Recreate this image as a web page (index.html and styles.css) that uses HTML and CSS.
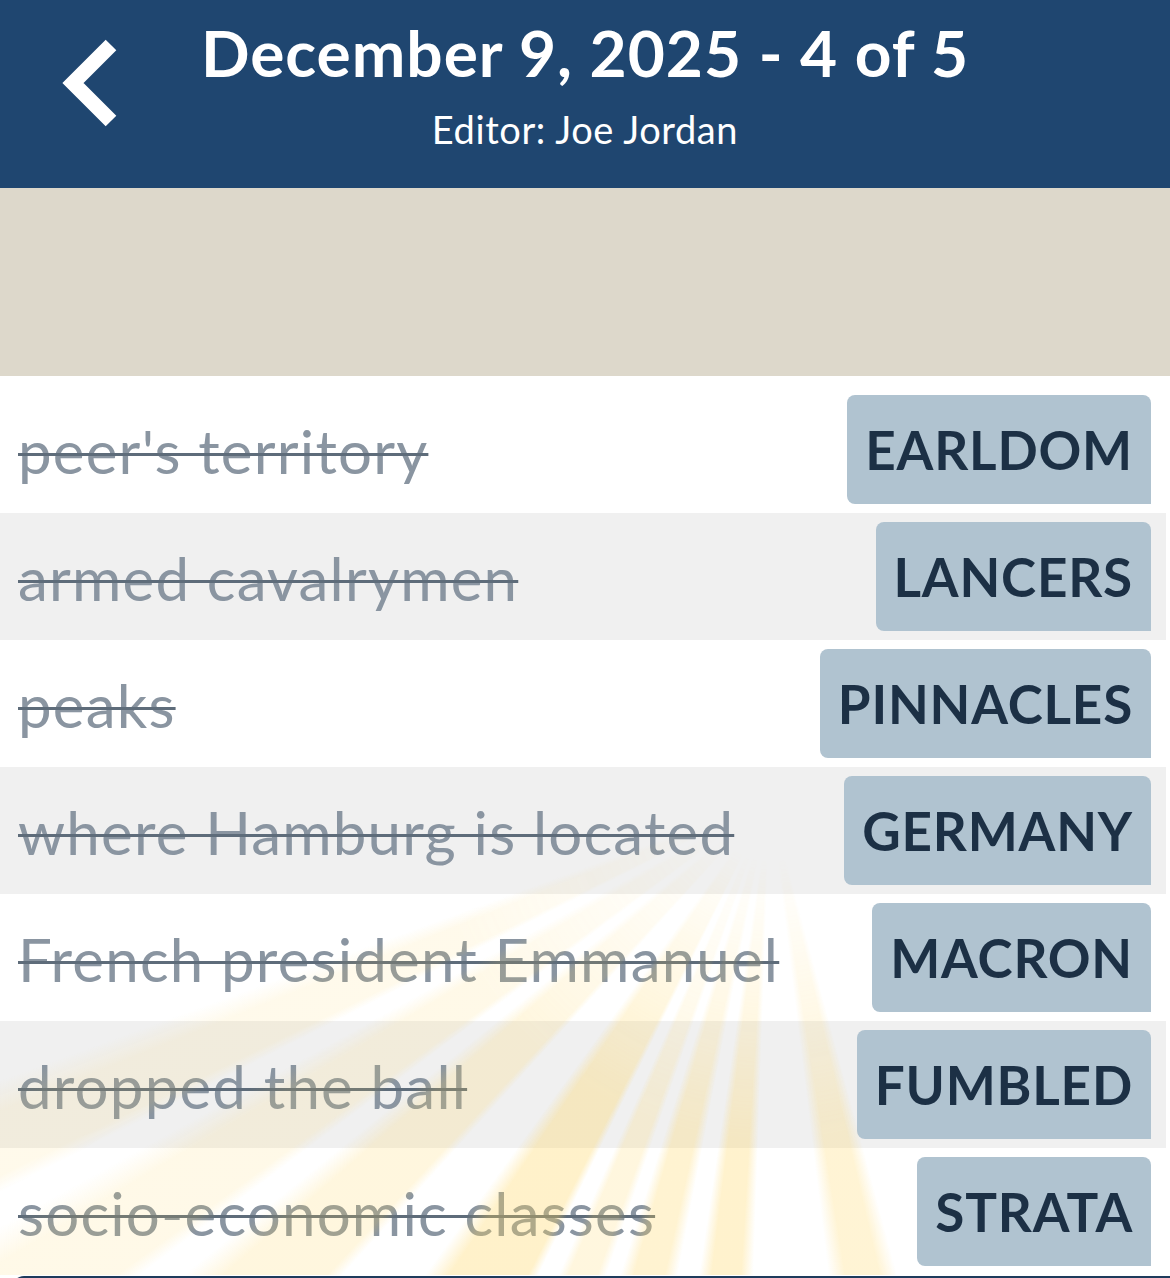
FILE: index.html
```html
<!DOCTYPE html>
<html lang="en">
<head>
    <meta charset="UTF-8">
    <meta name="viewport" content="width=device-width, initial-scale=1.0">
    <title>December 9, 2025 - 4 of 5</title>
    <link rel="stylesheet" href="styles.css">
</head>
<body>
    <div class="header">
        <a class="back" href="#" aria-label="Back">
            <svg width="64" height="94" viewBox="0 0 64 94">
                <polyline points="54,8 16,46 54,84" fill="none" stroke="#fff" stroke-width="15" stroke-linejoin="miter"/>
            </svg>
        </a>
        <div class="titles">
            <h1>December 9, 2025 - 4 of 5</h1>
            <div class="editor">Editor: Joe Jordan</div>
        </div>
    </div>
    <div class="band"></div>

    <div class="clues">
        <div class="row">
            <span class="clue">peer's territory</span>
            <span class="answer">EARLDOM</span>
        </div>
        <div class="row alt">
            <span class="clue">armed cavalrymen</span>
            <span class="answer">LANCERS</span>
        </div>
        <div class="row">
            <span class="clue">peaks</span>
            <span class="answer">PINNACLES</span>
        </div>
        <div class="row alt">
            <span class="clue">where Hamburg is located</span>
            <span class="answer">GERMANY</span>
        </div>
        <div class="row">
            <span class="clue">French president Emmanuel</span>
            <span class="answer">MACRON</span>
        </div>
        <div class="row alt">
            <span class="clue">dropped the ball</span>
            <span class="answer">FUMBLED</span>
        </div>
        <div class="row">
            <span class="clue">socio-economic classes</span>
            <span class="answer">STRATA</span>
        </div>
        <div class="rays"></div>
    </div>
    <div class="footer"></div>
</body>
</html>
```

FILE: styles.css
```css
html {
    overflow: hidden;
}
body {
    font-family: Lato, "Open Sans", sans-serif;
    margin: 0;
    padding: 0;
    background-color: #fff;
}
.header {
    background-color: #1f4670;
    height: 188px;
    position: relative;
    display: flex;
    justify-content: center;
    color: #fff;
}
.back {
    position: absolute;
    left: 57px;
    top: 37px;
    display: block;
}
.titles {
    text-align: center;
    padding-top: 16px;
}
.titles h1 {
    margin: 0;
    font-size: 64px;
    font-weight: 700;
    line-height: 74px;
    letter-spacing: 1px;
}
.editor {
    font-size: 38px;
    font-weight: 400;
    letter-spacing: 0.6px;
    margin-top: 16px;
}
.band {
    background-color: #ddd8cb;
    height: 188px;
}
.clues {
    position: relative;
    padding-top: 10px;
    margin-right: 4px;
}
.row {
    display: flex;
    align-items: center;
    justify-content: space-between;
    height: 127px;
    padding: 0 15px 0 18px;
    background-color: #fff;
}
.row.alt {
    background-color: #f0f0f0;
}
.clue {
    font-size: 60px;
    font-weight: 400;
    letter-spacing: 1.2px;
    color: #8a95a1;
    padding-top: 2px;
    text-decoration: line-through;
    text-decoration-color: #5e6c7a;
    text-decoration-thickness: 3px;
    white-space: nowrap;
}
.answer {
    background-color: #b0c3d0;
    color: #1c3045;
    font-size: 53px;
    font-weight: 700;
    letter-spacing: 0.8px;
    height: 109px;
    line-height: 109px;
    padding: 0 18px;
    border-radius: 8px 8px 0 8px;
}
.rays {
    position: absolute;
    left: 0;
    right: 0;
    top: 440px;
    bottom: 0;
    pointer-events: none;
    background: conic-gradient(from 0deg at 770px -16px,
        transparent 0deg 165deg,
        rgba(255, 212, 90, 0.26) 167deg 171deg,
        transparent 173deg 182deg,
        rgba(255, 212, 90, 0.3) 183.5deg 187deg,
        transparent 188.5deg 191deg,
        rgba(255, 212, 90, 0.28) 192.5deg 196deg,
        transparent 197.5deg 199deg,
        rgba(255, 212, 90, 0.2) 200deg 203deg,
        transparent 204deg 206deg,
        rgba(255, 212, 90, 0.32) 207deg 214deg,
        transparent 216deg 222deg,
        rgba(255, 212, 90, 0.2) 223deg 229deg,
        transparent 231deg 233deg,
        rgba(255, 212, 90, 0.14) 234deg 239deg,
        transparent 241deg 243deg,
        rgba(255, 212, 90, 0.12) 244deg 248deg,
        transparent 250deg 360deg);
    -webkit-mask-image: radial-gradient(circle at 770px -16px, transparent 60px, #000 340px);
    mask-image: radial-gradient(circle at 770px -16px, transparent 60px, #000 340px);
}
.footer {
    background-color: #1e3b5c;
    height: 30px;
    margin: 1px 0 0 12px;
    border-top-left-radius: 12px;
}
```
